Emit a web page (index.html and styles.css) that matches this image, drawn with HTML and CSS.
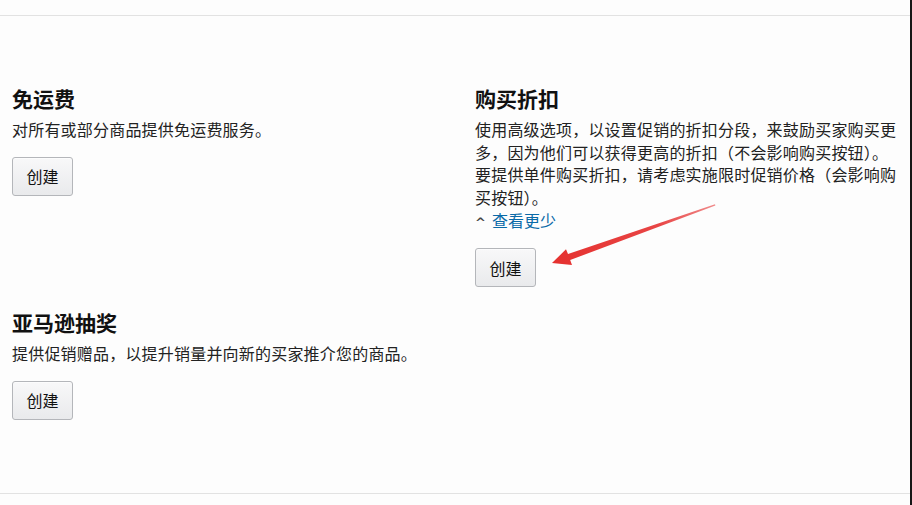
FILE: index.html
```html
<!DOCTYPE html>
<html lang="zh-CN">
<head>
<meta charset="utf-8">
<title>促销</title>
<link rel="stylesheet" href="styles.css">
</head>
<body>
<div class="page">
  <main class="main">
    <div class="rule"></div>
    <div class="content">
      <div class="grid">
        <section class="promo">
          <h2 class="promo-title">免运费</h2>
          <p class="promo-desc">对所有或部分商品提供免运费服务。</p>
          <button class="btn">创建</button>
        </section>
        <section class="promo">
          <h2 class="promo-title">购买折扣</h2>
          <p class="promo-desc">使用高级选项，以设置促销的折扣分段，来鼓励买家购买更多，因为他们可以获得更高的折扣（不会影响购买按钮）。要提供单件购买折扣，请考虑实施限时促销价格（会影响购买按钮）。</p>
          <a class="toggle" href="#"><span class="chev">^</span><span class="toggle-text">查看更少</span></a>
          <button class="btn">创建</button>
        </section>
        <section class="promo">
          <h2 class="promo-title">亚马逊抽奖</h2>
          <p class="promo-desc">提供促销赠品，以提升销量并向新的买家推介您的商品。</p>
          <button class="btn">创建</button>
        </section>
      </div>
    </div>
    <div class="rule"></div>
  </main>
  <div class="edge"></div>
  <svg class="arrow" width="912" height="505" viewBox="0 0 912 505" aria-hidden="true">
    <defs>
      <linearGradient id="ag" x1="715" y1="205" x2="552" y2="263" gradientUnits="userSpaceOnUse">
        <stop offset="0" stop-color="#f08a8a"/>
        <stop offset="0.35" stop-color="#e84545"/>
        <stop offset="1" stop-color="#e5312f"/>
      </linearGradient>
    </defs>
    <polygon fill="url(#ag)" points="552,263 566,249.3 568,254 715,204.3 715.4,205.6 570.2,260 572,265"/>
  </svg>
</div>
</body>
</html>
```
FILE: styles.css
```css
* { box-sizing: border-box; }

html, body {
  margin: 0;
  padding: 0;
  background: #ffffff;
}

body {
  font-family: "Noto Sans CJK SC", "Noto Sans", "Liberation Sans", sans-serif;
  color: #111111;
  width: 912px;
  height: 505px;
  overflow: hidden;
}

.page {
  position: relative;
  display: flex;
  width: 912px;
  height: 505px;
  background: #fdfdfd;
}

.main {
  flex: 1;
  display: flex;
  flex-direction: column;
  padding-top: 15px;
}

.rule {
  height: 1px;
  background: #e2e2e2;
}

.content {
  height: 477px;
  padding: 69px 0 0 12px;
}

.grid {
  display: grid;
  grid-template-columns: 463px 429px;
  row-gap: 22px;
}

.promo {
  display: flex;
  flex-direction: column;
  align-items: flex-start;
}

.promo-title {
  margin: 0 0 7px;
  font-size: 21px;
  line-height: 26px;
  font-weight: 700;
  color: #111111;
}

.promo-desc {
  margin: 0;
  font-size: 16px;
  line-height: 22.5px;
  color: #222222;
  letter-spacing: 0.2px;
}

.toggle {
  display: flex;
  align-items: center;
  gap: 6px;
  height: 22px;
  margin-top: 1px;
  margin-bottom: 1px;
  font-size: 16px;
  line-height: 22px;
  text-decoration: none;
  color: #0a6aa8;
}

.chev {
  color: #444444;
  font-size: 13px;
  font-family: "DejaVu Sans", sans-serif;
  font-weight: 700;
  padding-top: 5px;
}

.btn {
  margin-top: 16px;
  width: 61px;
  height: 39px;
  padding: 0;
  border: 1px solid #b4b6ba;
  border-radius: 3px;
  background: linear-gradient(#f8f8f9, #e9eaec);
  font-family: "Noto Sans CJK SC", "Noto Sans", sans-serif;
  font-size: 16px;
  color: #111111;
  box-shadow: 0 1px 0 rgba(255,255,255,0.6) inset;
}

.edge {
  width: 2px;
  background: #161616;
}

.arrow {
  position: absolute;
  left: 0;
  top: 0;
  pointer-events: none;
}
```
